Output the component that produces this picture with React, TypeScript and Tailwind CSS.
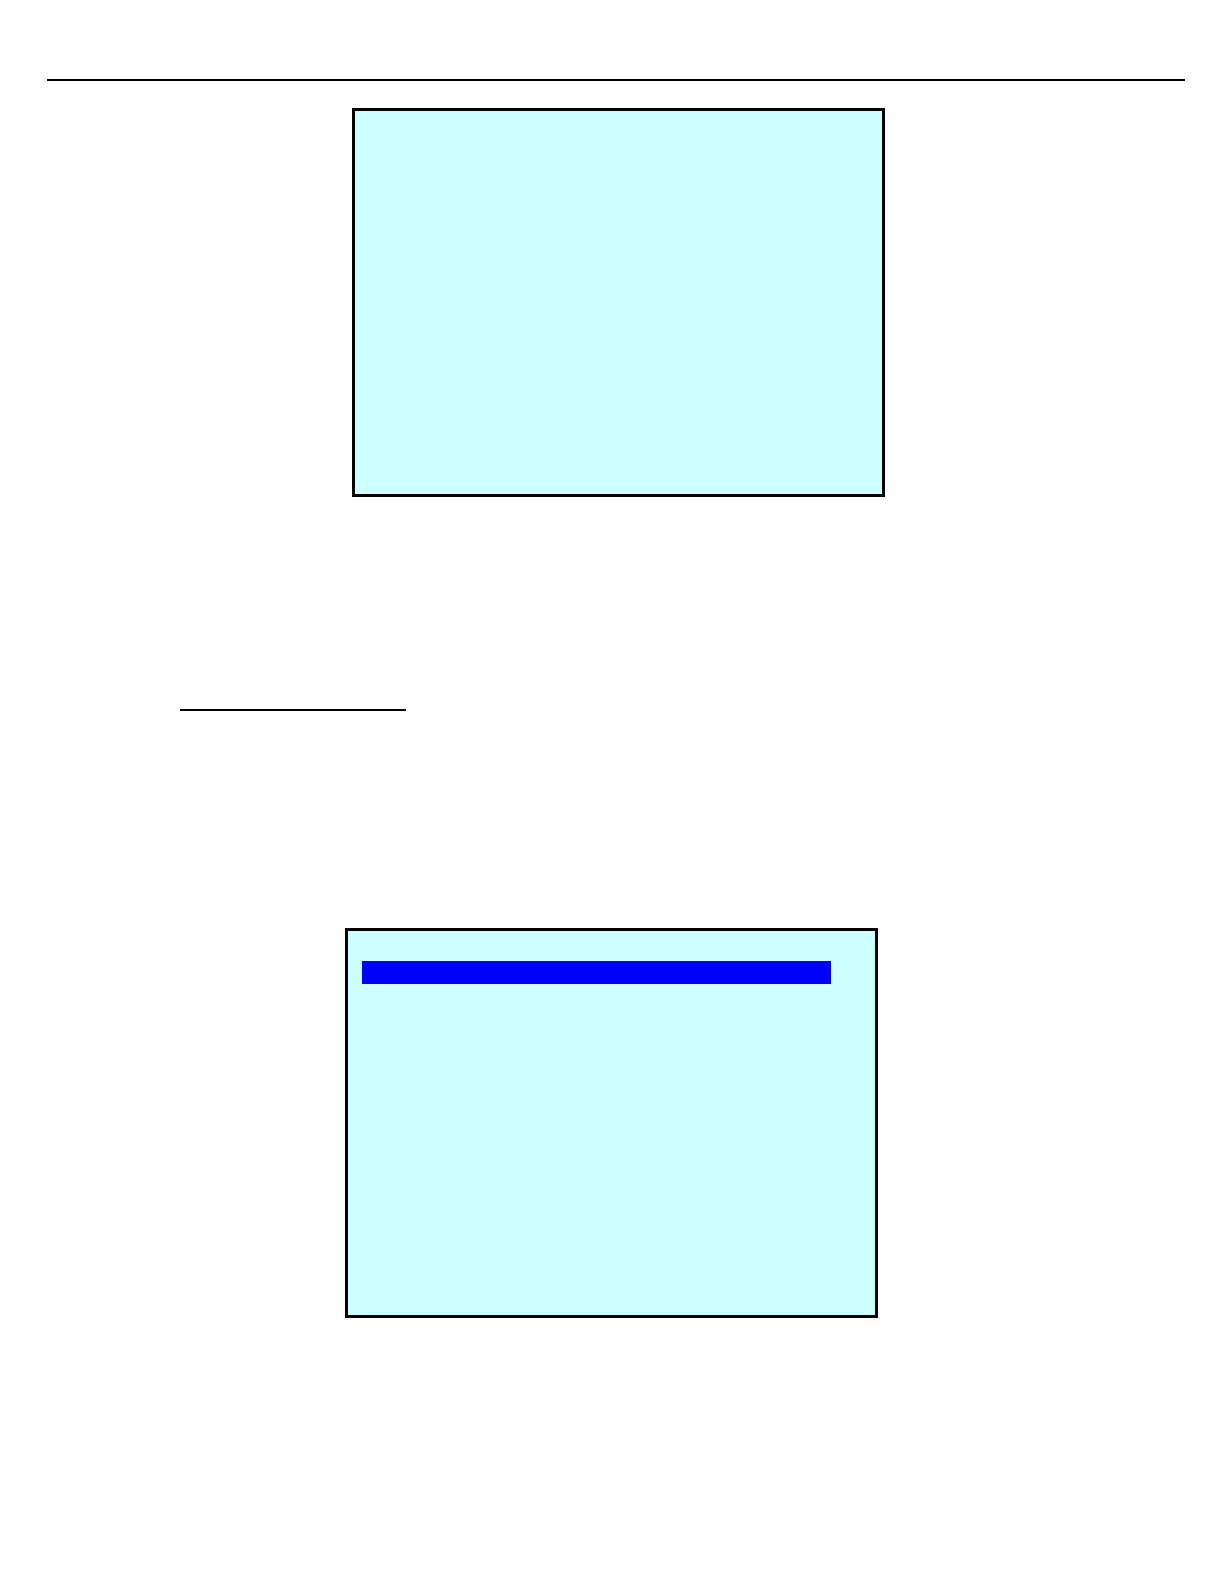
import React from "react";
import { clsx } from "clsx";

type ScreenProps = {
  className?: string;
  children?: React.ReactNode;
};

// Bordered terminal-style screen
const Screen = ({ className, children }: ScreenProps) => (
  <div
    className={clsx(
      "mx-auto w-full max-w-[533px] border-[3px] border-black bg-[#ccffff]",
      className
    )}
  >
    {children}
  </div>
);

export default function App() {
  return (
    <div className="min-h-screen bg-white pb-12">
      {/* Page header rule */}
      <header className="pt-[79px] pr-[39px] pl-[47px]">
        <hr className="border-t-2 border-black" />
      </header>

      <main>
        <section className="pt-[27px] pl-[13px]">
          <Screen className="min-h-[389px]" />
        </section>

        {/* Section divider */}
        <div className="px-[180px] pt-[212px]">
          <hr className="max-w-[226px] border-t-2 border-black" />
        </div>

        <section className="pt-[217px] pr-px">
          <Screen className="min-h-[390px] pt-[30px] pr-[44px] pl-[14px]">
            {/* Selected row */}
            <div className="h-[23px] bg-[#0000ff]" />
          </Screen>
        </section>
      </main>
    </div>
  );
}
